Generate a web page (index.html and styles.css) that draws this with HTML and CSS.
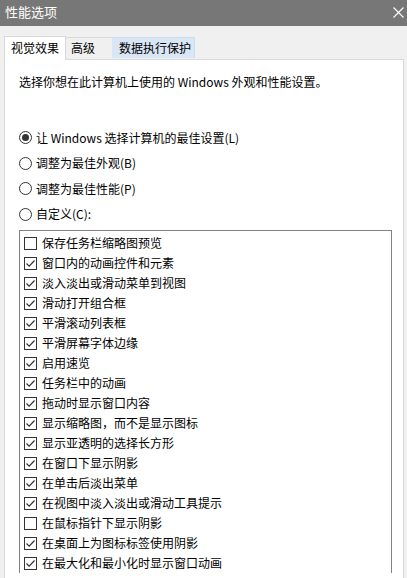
FILE: index.html
```html
<!DOCTYPE html>
<html lang="zh-CN">
<head>
<meta charset="utf-8">
<title>性能选项</title>
<link rel="stylesheet" href="styles.css">
</head>
<body>
<div class="window">
  <div class="titlebar">
    <span class="title">性能选项</span>
    <svg class="close" width="11" height="11" viewBox="0 0 11 11"><path d="M0.5 0.5 L10.5 10.5 M10.5 0.5 L0.5 10.5" stroke="#fff" stroke-width="1.1" fill="none"/></svg>
  </div>
  <div class="tabs">
    <div class="tab selected">视觉效果</div>
    <div class="tab">高级</div>
    <div class="tab hover">数据执行保护</div>
  </div>
  <div class="panel">
    <p class="desc">选择你想在此计算机上使用的 Windows 外观和性能设置。</p>
    <div class="radios">
      <div class="radio-row"><span class="radio on"></span><span>让 Windows 选择计算机的最佳设置(L)</span></div>
      <div class="radio-row"><span class="radio"></span><span>调整为最佳外观(B)</span></div>
      <div class="radio-row"><span class="radio"></span><span>调整为最佳性能(P)</span></div>
      <div class="radio-row"><span class="radio"></span><span>自定义(C):</span></div>
    </div>
    <div class="listbox">
      <div class="item"><span class="cb"></span><span>保存任务栏缩略图预览</span></div>
      <div class="item"><span class="cb on"><svg viewBox="0 0 13 13"><path d="M2.5 6.5 L5.2 9.2 L10.5 3.5"/></svg></span><span>窗口内的动画控件和元素</span></div>
      <div class="item"><span class="cb on"><svg viewBox="0 0 13 13"><path d="M2.5 6.5 L5.2 9.2 L10.5 3.5"/></svg></span><span>淡入淡出或滑动菜单到视图</span></div>
      <div class="item"><span class="cb on"><svg viewBox="0 0 13 13"><path d="M2.5 6.5 L5.2 9.2 L10.5 3.5"/></svg></span><span>滑动打开组合框</span></div>
      <div class="item"><span class="cb on"><svg viewBox="0 0 13 13"><path d="M2.5 6.5 L5.2 9.2 L10.5 3.5"/></svg></span><span>平滑滚动列表框</span></div>
      <div class="item"><span class="cb on"><svg viewBox="0 0 13 13"><path d="M2.5 6.5 L5.2 9.2 L10.5 3.5"/></svg></span><span>平滑屏幕字体边缘</span></div>
      <div class="item"><span class="cb on"><svg viewBox="0 0 13 13"><path d="M2.5 6.5 L5.2 9.2 L10.5 3.5"/></svg></span><span>启用速览</span></div>
      <div class="item"><span class="cb on"><svg viewBox="0 0 13 13"><path d="M2.5 6.5 L5.2 9.2 L10.5 3.5"/></svg></span><span>任务栏中的动画</span></div>
      <div class="item"><span class="cb on"><svg viewBox="0 0 13 13"><path d="M2.5 6.5 L5.2 9.2 L10.5 3.5"/></svg></span><span>拖动时显示窗口内容</span></div>
      <div class="item"><span class="cb on"><svg viewBox="0 0 13 13"><path d="M2.5 6.5 L5.2 9.2 L10.5 3.5"/></svg></span><span>显示缩略图，而不是显示图标</span></div>
      <div class="item"><span class="cb on"><svg viewBox="0 0 13 13"><path d="M2.5 6.5 L5.2 9.2 L10.5 3.5"/></svg></span><span>显示亚透明的选择长方形</span></div>
      <div class="item"><span class="cb on"><svg viewBox="0 0 13 13"><path d="M2.5 6.5 L5.2 9.2 L10.5 3.5"/></svg></span><span>在窗口下显示阴影</span></div>
      <div class="item"><span class="cb on"><svg viewBox="0 0 13 13"><path d="M2.5 6.5 L5.2 9.2 L10.5 3.5"/></svg></span><span>在单击后淡出菜单</span></div>
      <div class="item"><span class="cb on"><svg viewBox="0 0 13 13"><path d="M2.5 6.5 L5.2 9.2 L10.5 3.5"/></svg></span><span>在视图中淡入淡出或滑动工具提示</span></div>
      <div class="item"><span class="cb"></span><span>在鼠标指针下显示阴影</span></div>
      <div class="item"><span class="cb on"><svg viewBox="0 0 13 13"><path d="M2.5 6.5 L5.2 9.2 L10.5 3.5"/></svg></span><span>在桌面上为图标标签使用阴影</span></div>
      <div class="item"><span class="cb on"><svg viewBox="0 0 13 13"><path d="M2.5 6.5 L5.2 9.2 L10.5 3.5"/></svg></span><span>在最大化和最小化时显示窗口动画</span></div>
    </div>
  </div>
</div>
</body>
</html>
```

FILE: styles.css
```css
* { box-sizing: border-box; }
html, body {
  margin: 0;
  padding: 0;
  width: 407px;
  height: 578px;
  overflow: hidden;
  background: #f0f0f0;
}
body {
  font-family: "Noto Sans CJK SC", "Noto Sans", sans-serif;
  font-size: 12px;
  color: #000;
}
.window {
  width: 407px;
  height: 578px;
  overflow: hidden;
  background: #f0f0f0;
  display: flex;
  flex-direction: column;
}
.titlebar {
  height: 26px;
  flex: none;
  background: #777777;
  color: #fff;
  display: flex;
  align-items: center;
  justify-content: space-between;
  padding: 0 3px 2px 5px;
}
.title {
  font-size: 13px;
  line-height: 16px;
}
.close {
  display: block;
}
.tabs {
  height: 33px;
  flex: none;
  display: flex;
  align-items: flex-end;
  padding-left: 4px;
  position: relative;
  z-index: 1;
}
.tab {
  height: 21px;
  line-height: 20px;
  padding: 0 5px;
  border-top: 1px solid #d9d9d9;
  border-right: 1px solid #d9d9d9;
  background: #f0f0f0;
  margin-bottom: 1px;
  white-space: nowrap;
}
.tab.selected {
  height: 24px;
  line-height: 22px;
  padding: 0 6px;
  border-left: 1px solid #d9d9d9;
  border-right: 1px solid #d9d9d9;
  background: #fff;
  margin-bottom: -1px;
  width: 62px;
}
.tab.hover {
  background: #d8e6f5;
  border-color: #c9dcf0;
  padding: 0 6px 0 7px;
  width: 83px;
}
.tab:nth-child(2) {
  width: 46px;
  border-right: none;
}
.panel {
  flex: 1;
  margin: 0 3px 0 4px;
  background: #fff;
  border: 1px solid #d9d9d9;
  border-bottom: none;
  padding: 14px 10px 0 14px;
  min-height: 0;
  overflow: hidden;
}
.desc {
  margin: 0;
  line-height: 16px;
}
.radios {
  margin-top: 35px;
}
.radio-row {
  height: 25.5px;
  display: flex;
  align-items: center;
  gap: 4px;
  line-height: 16px;
}
.radio {
  width: 13px;
  height: 13px;
  border: 1px solid #333;
  border-radius: 50%;
  background: #fff;
  flex: none;
  display: flex;
  align-items: center;
  justify-content: center;
}
.radio.on::after {
  content: "";
  width: 7px;
  height: 7px;
  border-radius: 50%;
  background: #333;
}
.listbox {
  margin-top: 3px;
  width: 373px;
  border: 1px solid #828282;
  border-bottom: none;
  background: #fff;
  padding: 2px 4px 0 4px;
}
.item {
  height: 20px;
  display: flex;
  align-items: center;
  gap: 5px;
  line-height: 16px;
  white-space: nowrap;
}
.cb {
  width: 13px;
  height: 13px;
  border: 1px solid #333;
  background: #fff;
  flex: none;
  display: block;
  position: relative;
}
.cb svg {
  position: absolute;
  left: -1px;
  top: -1px;
  width: 13px;
  height: 13px;
  fill: none;
  stroke: #333;
  stroke-width: 1.2;
}
```
